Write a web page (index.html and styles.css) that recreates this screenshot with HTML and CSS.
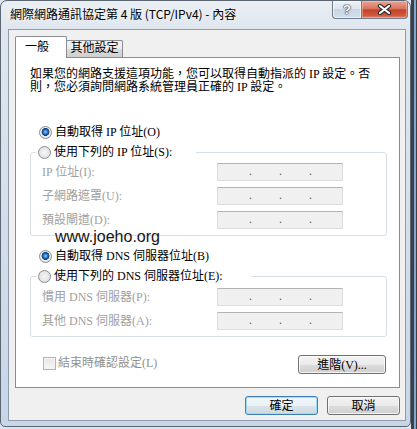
FILE: index.html
```html
<!DOCTYPE html>
<html lang="zh-Hant">
<head>
<meta charset="utf-8">
<title>網際網路通訊協定第 4 版 (TCP/IPv4) - 內容</title>
<link rel="stylesheet" href="styles.css">
</head>
<body>
<div class="window">
  <div class="titlebar">
    <div class="title">網際網路通訊協定第 4 版 (TCP/IPv4) - 內容</div>
    <div class="caption">
      <div class="cbtn help"><span>?</span></div>
      <div class="cbtn close">
        <svg width="15" height="11" viewBox="0 0 15 11"><path d="M3 2 L12 9 M12 2 L3 9" stroke="#2b2b2b" stroke-width="4.2" stroke-linecap="round" fill="none"/><path d="M3 2 L12 9 M12 2 L3 9" stroke="#fff" stroke-width="2.2" stroke-linecap="round" fill="none"/></svg>
      </div>
    </div>
  </div>
  <div class="client">
    <div class="tabs">
      <div class="tab active">一般</div>
      <div class="tab">其他設定</div>
    </div>
    <div class="panel">
      <p class="intro">如果您的網路支援這項功能，您可以取得自動指派的 IP 設定。否<br>則，您必須詢問網路系統管理員正確的 IP 設定。</p>
      <div class="opt first"><span class="radio on"></span>自動取得 IP 位址(O)</div>
      <fieldset class="group ipgroup">
        <legend class="leg-ip"><span class="opt"><span class="radio"></span>使用下列的 IP 位址(S):</span></legend>
        <div class="field"><span class="lbl">IP 位址(I):</span><span class="ipbox"><i>.</i><i>.</i><i>.</i></span></div>
        <div class="field"><span class="lbl">子網路遮罩(U):</span><span class="ipbox"><i>.</i><i>.</i><i>.</i></span></div>
        <div class="field"><span class="lbl">預設閘道(D):</span><span class="ipbox"><i>.</i><i>.</i><i>.</i></span></div>
      </fieldset>
      <div class="opt dns"><span class="radio on"></span>自動取得 DNS 伺服器位址(B)</div>
      <fieldset class="group dnsgroup">
        <legend class="leg-dns"><span class="opt"><span class="radio"></span>使用下列的 DNS 伺服器位址(E):</span></legend>
        <div class="field"><span class="lbl">慣用 DNS 伺服器(P):</span><span class="ipbox"><i>.</i><i>.</i><i>.</i></span></div>
        <div class="field"><span class="lbl">其他 DNS 伺服器(A):</span><span class="ipbox"><i>.</i><i>.</i><i>.</i></span></div>
      </fieldset>
      <div class="bottom">
        <div class="check"><span class="box"></span>結束時確認設定(L)</div>
        <button class="btn adv">進階(V)...</button>
      </div>
      <div class="watermark">www.joeho.org</div>
    </div>
    <div class="actions">
      <button class="btn ok">確定</button>
      <button class="btn cancel">取消</button>
    </div>
  </div>
</div>
</body>
</html>
```
FILE: styles.css
```css
html, body {
  margin: 0;
  padding: 0;
}
body {
  width: 417px;
  height: 429px;
  overflow: hidden;
  background: linear-gradient(90deg, #dbe4ee 0 411px, #3c4046 411px 414px, #7fa6cf 414px 416px, #3c4046 416px);
  font-family: "Liberation Serif", "Noto Sans CJK TC", serif;
  font-size: 12px;
  color: #000;
}
.window {
  width: 411px;
  height: 427px;
  box-sizing: border-box;
  border: 1px solid #5d6774;
  border-radius: 7px 7px 5px 5px;
  background: linear-gradient(180deg, #eaeff4 0, #dfe6ee 28px, #d2dde9 60%, #c6d6e8 100%);
  display: flex;
  flex-direction: column;
  overflow: hidden;
}
.titlebar {
  height: 28px;
  flex-shrink: 0;
  display: flex;
  align-items: flex-start;
}
.title {
  margin: 4px 0 0 9px;
  line-height: 18px;
  font-family: "Noto Sans CJK TC", sans-serif;
  font-size: 12px;
  color: #000;
  text-shadow: 0 0 6px #fff;
}
.caption {
  margin-left: auto;
  margin-right: 2px;
  display: flex;
}
.cbtn {
  height: 18px;
  box-sizing: border-box;
  display: flex;
  align-items: center;
  justify-content: center;
  border: 1px solid #6f7d8e;
  border-top: 0;
}
.help {
  width: 29px;
  border-right: 0;
  border-radius: 0 0 0 4px;
  background: linear-gradient(180deg, #eef2f6 0%, #dde5ee 45%, #c9d5e3 50%, #d3dfec 100%);
  box-shadow: inset 0 0 0 1px rgba(255,255,255,.6);
}
.help span {
  font-family: "Liberation Sans", sans-serif;
  font-weight: bold;
  font-size: 13px;
  line-height: 14px;
  color: #fff;
  text-shadow: 0 0 1px #333, 0 0 1px #333, 0 0 2px #555;
}
.close {
  width: 47px;
  border-radius: 0 0 4px 0;
  background: linear-gradient(180deg, #e8a596 0%, #d9735e 45%, #c3412a 52%, #cf5a3e 85%, #e08a6a 100%);
  box-shadow: inset 0 0 0 1px rgba(255,220,210,.4);
}
.client {
  margin: 0 4px 0 7px;
  height: 392px;
  box-sizing: border-box;
  border: 1px solid #8f9cab;
  background: #f0f0f0;
  padding: 6px 5px 0 6px;
}
.tabs {
  display: flex;
  align-items: flex-end;
  height: 21px;
}
.tab {
  width: 57px;
  height: 17px;
  box-sizing: border-box;
  margin-left: -1px;
  border: 1px solid #898c95;
  border-bottom: 0;
  border-radius: 2px 2px 0 0;
  background: linear-gradient(180deg, #f2f2f2 0%, #ebebeb 50%, #dddddd 50%, #cfcfcf 100%);
  text-align: center;
  line-height: 15px;
}
.tab.active {
  width: 52px;
  height: 22px;
  margin-left: 0;
  margin-bottom: -1px;
  background: #fff;
  position: relative;
  z-index: 2;
  text-align: left;
  padding: 3px 0 0 9px;
  line-height: 14px;
}
.panel {
  height: 331px;
  box-sizing: border-box;
  border: 1px solid #898c95;
  background: #fff;
  padding: 10px 12px 0 14px;
  position: relative;
}
.intro {
  margin: 0;
  line-height: 13px;
}
.opt {
  display: flex;
  align-items: center;
  height: 16px;
  line-height: 16px;
  white-space: nowrap;
}
.opt.first {
  margin-top: 30px;
}
.opt.dns {
  margin-top: 12px;
}
.opt.first .radio,
.opt.dns .radio {
  margin-left: 9px;
}
.radio {
  width: 13px;
  height: 13px;
  box-sizing: border-box;
  border-radius: 50%;
  border: 1px solid #8a8d91;
  margin-right: 3px;
  flex-shrink: 0;
  background: radial-gradient(circle at 50% 50%, #f7f7f7 0, #e4e4e4 5px, #d9d9d9 6px);
}
.radio.on {
  background: radial-gradient(circle at 50% 45%, #8fd0fb 0, #3b8ad6 1.6px, #154a8a 3.2px, #103a70 3.7px, #f6f6f6 4.2px, #e2e2e2 6px);
}
.group {
  margin: 4px 0 0;
  padding: 3px 0 6px 11px;
  border: 1px solid #d5dfe5;
  border-radius: 3px;
  min-width: 0;
}
.dnsgroup {
  padding-top: 4px;
}
legend {
  margin-left: -6px;
  padding: 0 24px 0 2px;
}
.leg-dns {
  padding-right: 28px;
}
.field {
  display: flex;
  align-items: center;
  height: 18px;
}
.field + .field {
  margin-top: 6px;
}
.lbl {
  width: 175px;
  flex-shrink: 0;
  color: #a0a0a0;
  line-height: 14px;
}
.ipbox {
  width: 126px;
  height: 18px;
  box-sizing: border-box;
  border: 1px solid #dcdcdc;
  border-top-color: #b4b4b4;
  background: #f0f0f0;
  display: flex;
  padding-left: 31px;
  gap: 27px;
}
.ipbox i {
  font-style: normal;
  width: 3px;
  line-height: 14px;
  color: #5a5a5a;
}
.bottom {
  display: flex;
  align-items: flex-start;
  margin-top: 18px;
  height: 19px;
}
.check {
  display: flex;
  align-items: center;
  margin-left: 13px;
  line-height: 16px;
  color: #8f8f8f;
}
.box {
  width: 13px;
  height: 13px;
  box-sizing: border-box;
  border: 1px solid #b3b3b3;
  background: linear-gradient(180deg, #e8e8e8, #f6f6f6);
  box-shadow: inset 0 0 0 1px #f4f4f4;
  margin-right: 2px;
}
.btn {
  height: 19px;
  box-sizing: border-box;
  padding: 0;
  border: 1px solid #707070;
  border-radius: 3px;
  background: linear-gradient(180deg, #f2f2f2 0%, #ebebeb 50%, #dddddd 50%, #cfcfcf 100%);
  box-shadow: inset 0 0 0 1px rgba(255,255,255,.75);
  font-family: "Liberation Serif", "Noto Sans CJK TC", serif;
  font-size: 12px;
  line-height: 16px;
  color: #000;
}
.adv {
  margin-left: auto;
  margin-right: 1px;
  width: 88px;
}
.actions {
  display: flex;
  justify-content: flex-end;
  gap: 9px;
  margin-top: 8px;
}
.ok, .cancel {
  width: 73px;
}
.ok {
  border-color: #3c7fb1;
  background: linear-gradient(180deg, #f3f7fa 0%, #eaf0f4 50%, #dae4ea 50%, #cdd9e1 100%);
  box-shadow: inset 0 0 0 1px #9fdcf6;
}
.watermark {
  position: absolute;
  left: 39px;
  top: 172px;
  font-family: "Liberation Sans", sans-serif;
  font-size: 16px;
  line-height: 14px;
  color: #151515;
}
```
